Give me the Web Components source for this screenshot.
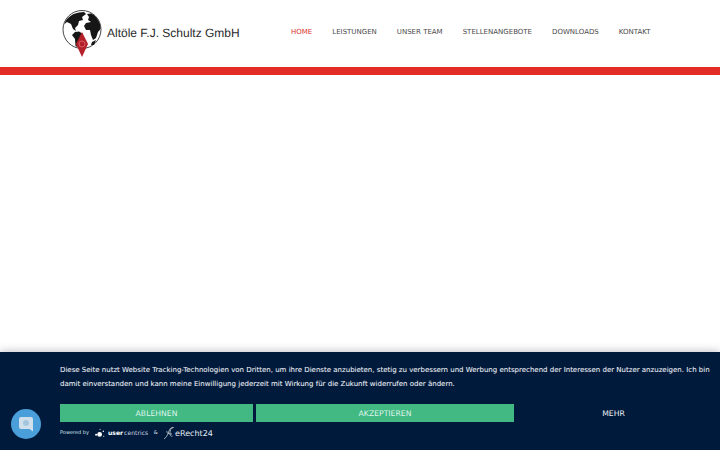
<!DOCTYPE html>
<html lang="de">
<head>
<meta charset="utf-8">
<title>Altöle F.J. Schultz GmbH</title>
<style>
  html, body { margin: 0; height: 100%; overflow: hidden; background: #fff; }
  body {
    display: flex;
    flex-direction: column;
    font-family: "DejaVu Sans", sans-serif;
    text-rendering: geometricPrecision;
  }
  .spacer { flex: 1; }
</style>
</head>
<body>
<site-header>
  <nav-link active>Home</nav-link>
  <nav-link>Leistungen</nav-link>
  <nav-link>Unser Team</nav-link>
  <nav-link>Stellenangebote</nav-link>
  <nav-link>Downloads</nav-link>
  <nav-link>Kontakt</nav-link>
</site-header>
<div class="spacer"></div>
<cookie-banner>
  Diese Seite nutzt Website Tracking-Technologien von Dritten, um ihre Dienste anzubieten, stetig zu verbessern und Werbung entsprechend der Interessen der Nutzer anzuzeigen. Ich bin damit einverstanden und kann meine Einwilligung jederzeit mit Wirkung für die Zukunft widerrufen oder ändern.
</cookie-banner>
<chat-button></chat-button>

<script>
const HeaderContent = `
  <style>
    :host { display: block; }
    .top {
      height: 67px;
      display: flex;
      align-items: flex-start;
      padding-left: 62px;
      box-sizing: border-box;
    }
    .brand { display: flex; align-items: flex-start; gap: 4px; width: 229px; padding-top: 10px; }
    .brand svg { display: block; flex: none; }
    .name {
      font: 12px/14px "Liberation Sans", Arial, sans-serif;
      color: #2a2a2a;
      white-space: nowrap;
      margin-top: 16px;
    }
    nav { display: flex; gap: 20px; padding-top: 26.500px; }
    .bar { height: 8px; background: #e22b24; }
  </style>
  <div class="top">
    <div class="brand">
      <svg width="41" height="47" viewBox="0 0 41 47">
        <circle cx="20" cy="19.500" r="19" fill="#fff" stroke="#444" stroke-width="1"/>
        <path fill="#161616" d="M6 8 C9 5 13 3 17 2.500 L22 2 L24 4 L20 7 L21 10 L17 11 L16 15 L13 18 L14 21 L11 19 L9 14 L5 12 L2.500 14 C3 12 4 10 6 8Z"/>
        <path fill="#161616" d="M13 22 L17 21.500 L21 24 L19 28 L17 33 L15.500 37 L13.500 36 L13 29 L10 25Z"/>
        <path fill="#161616" d="M25 4 L29 3.500 C33 5 36 9 38 14 L38.500 19 L36 22 L34 28 L31 30 L29 25 L28 20 L24 20 L22 16 L24 13 L29 12 L26 10 L27 7Z"/>
        <path fill="#161616" d="M30 32 L34 30 L32 35 L29 35Z"/>
        <path fill="#b5212a" d="M20 22 L26 34 L20 47 L14 34Z"/>
        <circle cx="20" cy="34" r="3" fill="none" stroke="#e9838a" stroke-width=".6"/>
      </svg>
      <span class="name">Altöle F.J. Schultz GmbH</span>
    </div>
    <nav><slot></slot></nav>
  </div>
  <div class="bar"></div>`;

class SiteHeader extends HTMLElement {
  constructor() {
    super();
    this.attachShadow({ mode: "open" }).innerHTML = HeaderContent;
  }
}
customElements.define("site-header", SiteHeader);

const NavLinkContent = `
  <style>
    :host {
      display: block;
      font-size: 7px;
      line-height: 10px;
      text-transform: uppercase;
      color: #4a4a4a;
      white-space: nowrap;
    }
    :host([active]) { color: #d9342b; }
  </style>
  <slot></slot>`;

class NavLink extends HTMLElement {
  constructor() {
    super();
    this.attachShadow({ mode: "open" }).innerHTML = NavLinkContent;
  }
}
customElements.define("nav-link", NavLink);

const BannerContent = `
  <style>
    :host {
      display: block;
      height: 98px;
      box-sizing: border-box;
      padding: 11px 10px 0 60px;
      background: #001a3b;
      color: #eef1f6;
      box-shadow: 0 0 9px rgba(0, 10, 40, .3);
      font-size: 7px;
    }
    .text { line-height: 14px; height: 41px; text-shadow: 0 0 1px rgba(238, 241, 246, .25); }
    .buttons { display: flex; gap: 3px; height: 18px; font-size: 7.700px; }
    .buttons div {
      display: flex;
      align-items: center;
      justify-content: center;
      background: #42b883;
      color: #def6ea;
    }
    .buttons .no { width: 193px; }
    .buttons .yes { width: 258px; }
    .buttons .more { flex: 1; background: none; color: #eef1f6; }
    .powered {
      display: flex;
      align-items: center;
      height: 22px;
      font-size: 5px;
      color: #dfe5ee;
    }
    .uc { display: flex; align-items: center; gap: 1px; margin-left: 6px; font-size: 6.100px; color: #cfd6e0; }
    .uc b { color: #fff; }
    .amp { margin: 0 5.500px; font-size: 5px; }
    .er { display: flex; align-items: center; font-size: 8px; color: #e8ecf2; }
  </style>
  <div class="text"><slot></slot></div>
  <div class="buttons">
    <div class="no">ABLEHNEN</div>
    <div class="yes">AKZEPTIEREN</div>
    <div class="more">MEHR</div>
  </div>
  <div class="powered">
    Powered by
    <span class="uc">
      <svg width="12" height="12" viewBox="0 0 13 12" fill="#fff">
        <circle cx="5" cy="7.500" r="2.600"/><circle cx="1.200" cy="8" r="1.100"/><circle cx="9" cy="4" r=".8"/><circle cx="5.500" cy="2" r=".6"/><circle cx="9.500" cy="9.500" r=".6"/>
      </svg>
      <b>user</b>centrics
    </span>
    <span class="amp">&amp;</span>
    <span class="er">
      <svg width="12" height="14" viewBox="0 0 12 14" fill="none" stroke="#fff" stroke-width=".6">
        <path d="M1 13 C4 11 5 8 6 5 C7 2 9 1 10.500 1.500 C8 2 7 4 7 7 C7 9.500 8 11 9.500 10 M4 5 C3 7 6 8 9 8"/>
      </svg>
      eRecht24
    </span>
  </div>`;

class CookieBanner extends HTMLElement {
  constructor() {
    super();
    this.attachShadow({ mode: "open" }).innerHTML = BannerContent;
  }
}
customElements.define("cookie-banner", CookieBanner);

const ChatContent = `
  <style>
    :host {
      position: fixed;
      left: 11px;
      top: 409px;
      width: 30px;
      height: 30px;
      border-radius: 50%;
      background: #4a9fdb;
      display: flex;
      align-items: center;
      justify-content: center;
    }
  </style>
  <svg width="14" height="15" viewBox="0 0 14 15">
    <path fill="#cfe0ec" d="M2 0 H12 A2 2 0 0 1 14 2 V14.500 L10.500 12 H2 A2 2 0 0 1 0 10 V2 A2 2 0 0 1 2 0Z"/>
    <circle cx="7" cy="6" r="3" fill="#a3c6de"/>
  </svg>`;

class ChatButton extends HTMLElement {
  constructor() {
    super();
    this.attachShadow({ mode: "open" }).innerHTML = ChatContent;
  }
}
customElements.define("chat-button", ChatButton);
</script>
</body>
</html>
